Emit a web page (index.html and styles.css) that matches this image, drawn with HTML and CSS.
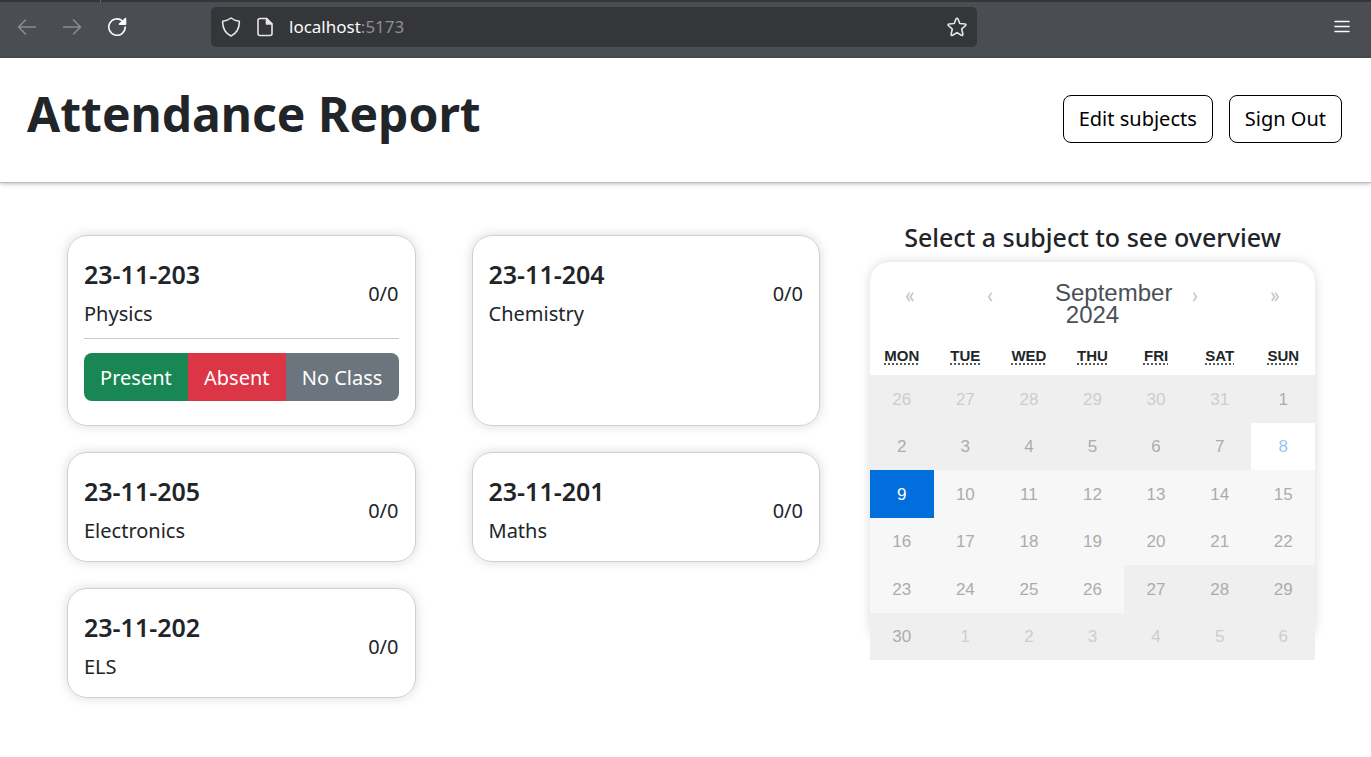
FILE: index.html
```html
<!DOCTYPE html>
<html lang="en">
<head>
<meta charset="utf-8">
<meta name="viewport" content="width=device-width, initial-scale=1">
<title>Attendance Report</title>
<link rel="stylesheet" href="styles.css">
</head>
<body>
<div class="tab-edge"></div>
<div class="toolbar">
  <div class="nav-buttons">
    <button class="tool dim" type="button" aria-label="Back"><svg width="20" height="20" viewBox="0 0 20 20"><path d="M18.300 10H1.800M8.500 3L1.500 10L8.500 17"/></svg></button>
    <button class="tool dim" type="button" aria-label="Forward"><svg width="20" height="20" viewBox="0 0 20 20"><path d="M1.500 10H18M11.500 3L18.500 10L11.500 17"/></svg></button>
    <button class="tool" type="button" aria-label="Reload"><svg width="20" height="20" viewBox="0 0 20 20"><path d="M15.500 4A8.200 8.200 0 1 0 18.200 10"/><path class="solid" d="M18.500 1.500V7.200H12.500Z"/></svg></button>
  </div>
  <div class="address">
    <svg class="icon" width="20" height="20" viewBox="0 0 20 20" aria-hidden="true"><path d="M10 1C12.500 3 15 3.800 18.300 4.200C18.600 11 16 16 10 19C4 16 1.400 11 1.700 4.200C5 3.800 7.500 3 10 1Z"/></svg>
    <svg class="icon" width="20" height="20" viewBox="0 0 20 20" aria-hidden="true"><path d="M11.500 1.500H5Q3 1.500 3 3.500V16.500Q3 18.500 5 18.500H15Q17 18.500 17 16.500V7Z"/><path class="solid" d="M11.500 1.500L17 7H11.500Z"/></svg>
    <span class="url">localhost<span class="port">:5173</span></span>
    <button class="tool" type="button" aria-label="Bookmark"><svg class="icon" width="20" height="20" viewBox="0 0 20 20"><path d="M10 1.200Q10.700 1.200 11 2L12.800 6.500L18 7Q19.600 7.400 18.500 8.600L14.700 12L15.900 17.200Q15.900 18.900 14.400 18.300L10 15.600L5.600 18.300Q4.100 18.900 4.100 17.200L5.300 12L1.500 8.600Q.4 7.400 2 7L7.200 6.500L9 2Q9.300 1.200 10 1.200Z"/></svg></button>
  </div>
  <button class="tool" type="button" aria-label="Menu"><svg width="20" height="20" viewBox="0 0 20 20"><path d="M3 4.500H17M3 9.500H17M3 14.500H17"/></svg></button>
</div>

<header class="header">
  <h1 class="title">Attendance Report</h1>
  <div class="actions">
    <button class="outline" type="button">Edit subjects</button>
    <button class="outline" type="button">Sign Out</button>
  </div>
</header>

<main class="main">
  <section class="cards">
    <article class="card">
      <div class="card-head"><div><h2 class="code">23-11-203</h2><p class="subject">Physics</p></div><span>0/0</span></div>
      <hr class="rule">
      <div class="group">
        <button class="mark present" type="button">Present</button>
        <button class="mark absent" type="button">Absent</button>
        <button class="mark none" type="button">No Class</button>
      </div>
    </article>
    <article class="card"><div class="card-head"><div><h2 class="code">23-11-204</h2><p class="subject">Chemistry</p></div><span>0/0</span></div></article>
    <article class="card"><div class="card-head"><div><h2 class="code">23-11-205</h2><p class="subject">Electronics</p></div><span>0/0</span></div></article>
    <article class="card"><div class="card-head"><div><h2 class="code">23-11-201</h2><p class="subject">Maths</p></div><span>0/0</span></div></article>
    <article class="card"><div class="card-head"><div><h2 class="code">23-11-202</h2><p class="subject">ELS</p></div><span>0/0</span></div></article>
  </section>

  <section class="overview">
    <h2 class="prompt">Select a subject to see overview</h2>
    <div class="calendar">
      <div class="cal-nav">
        <button class="arrow" type="button" aria-label="Previous year">«</button>
        <button class="arrow" type="button" aria-label="Previous month">‹</button>
        <button class="month" type="button">September 2024</button>
        <button class="arrow" type="button" aria-label="Next month">›</button>
        <button class="arrow" type="button" aria-label="Next year">»</button>
      </div>
      <div class="weekdays">
        <abbr title="Monday">Mon</abbr><abbr title="Tuesday">Tue</abbr><abbr title="Wednesday">Wed</abbr><abbr title="Thursday">Thu</abbr><abbr title="Friday">Fri</abbr><abbr title="Saturday">Sat</abbr><abbr title="Sunday">Sun</abbr>
      </div>
      <div class="days">
        <button class="day off other">26</button><button class="day off other">27</button><button class="day off other">28</button><button class="day off other">29</button><button class="day off other">30</button><button class="day off other">31</button><button class="day off">1</button>
        <button class="day off">2</button><button class="day off">3</button><button class="day off">4</button><button class="day off">5</button><button class="day off">6</button><button class="day off">7</button><button class="day open">8</button>
        <button class="day active">9</button><button class="day">10</button><button class="day">11</button><button class="day">12</button><button class="day">13</button><button class="day">14</button><button class="day">15</button>
        <button class="day">16</button><button class="day">17</button><button class="day">18</button><button class="day">19</button><button class="day">20</button><button class="day">21</button><button class="day">22</button>
        <button class="day">23</button><button class="day">24</button><button class="day">25</button><button class="day">26</button><button class="day off">27</button><button class="day off">28</button><button class="day off">29</button>
        <button class="day off">30</button><button class="day off other">1</button><button class="day off other">2</button><button class="day off other">3</button><button class="day off other">4</button><button class="day off other">5</button><button class="day off other">6</button>
      </div>
    </div>
  </section>
</main>
</body>
</html>
```
FILE: styles.css
```css
* { box-sizing: border-box; }

body {
  margin: 0;
  background: #fff;
  color: #212529;
  font: 20px/30px "Noto Sans", sans-serif;
}

button {
  margin: 0;
  padding: 0;
  border: 0;
  background: none;
  color: inherit;
  font: inherit;
  cursor: pointer;
}

h1, h2, p { margin: 0; }

/* Browser toolbar */
.tab-edge {
  height: 2px;
  background: linear-gradient(#6b6c70, #6b6c70) 100px 0 / 1px 2px no-repeat #35363a;
}
.toolbar {
  display: flex;
  align-items: center;
  gap: 84px;
  padding: 5px 19px 11px 17px;
  background: #4a4d51;
  color: #fbfbfe;
}
.toolbar > .tool { margin-left: auto; }
.nav-buttons { display: flex; gap: 25px; }
.tool { display: flex; }
.dim { color: #8b8c8f; }
.toolbar svg {
  display: block;
  fill: none;
  stroke: currentColor;
  stroke-width: 1.6;
  stroke-linecap: round;
  stroke-linejoin: round;
}
.toolbar .solid { fill: currentColor; }
.address {
  display: flex;
  align-items: center;
  flex: 0 1 766px;
  height: 40px;
  padding: 0 10px;
  gap: 14px;
  border-radius: 5px;
  background: #35363a;
}
.icon { color: #e6e6e8; }
.url { flex: 1; font-size: 17px; }
.port { color: #8f8f93; }

/* Page header */
.header {
  display: flex;
  align-items: center;
  justify-content: space-between;
  padding: 28px 29px 30px 27px;
  border-bottom: 1px solid #bdbdbd;
  box-shadow: 0 1px 4px rgba(0, 0, 0, .25);
}
.title { font-size: 48px; line-height: 56px; font-weight: 700; padding-bottom: 10px; }
.actions { display: flex; gap: 16px; }
.outline {
  padding: 8px 15px;
  border: 1px solid #000;
  border-radius: 8px;
  color: #000;
}

/* Page content */
.main {
  display: flex;
  align-items: flex-start;
  gap: 50px;
  padding: 39px 56px 60px 67px;
}
.cards {
  flex: 753 1 0;
  display: grid;
  grid-template-columns: 1fr 1fr;
  gap: 26px 56px;
  padding-top: 13px;
}
.card {
  padding: 23px 16px 15px;
  border: 1px solid #cfcfcf;
  border-radius: 20px;
  box-shadow: 0 0 12px rgba(0, 0, 0, .15);
}
.card-head { display: flex; align-items: center; justify-content: space-between; }
.code { font-size: 25px; line-height: 30px; font-weight: 600; padding-bottom: 10px; }
.rule { margin: 9px 0 14px; border: 0; border-top: 1px solid #c8c9ca; }
.group { display: flex; margin-bottom: 9px; border-radius: 8px; overflow: hidden; }
.mark { flex: 1 1 auto; padding: 10px 0 8px; color: #fff; }
.present { background: #198754; }
.absent { background: #dc3545; }
.none { background: #6c757d; }

/* Calendar */
.overview { flex: 445 1 0; min-width: 0; }
.prompt { font-size: 25px; line-height: 30px; font-weight: 500; padding-bottom: 10px; text-align: center; }
.calendar {
  max-height: 380px;
  border-radius: 20px;
  box-shadow: 0 0 12px rgba(0, 0, 0, .15);
  font-family: "Liberation Sans", Arial, sans-serif;
}
.cal-nav { display: flex; padding: 8px 0; line-height: 22px; }
.arrow { flex: 0 0 80px; padding-bottom: 16px; color: #c4c4c4; font-family: Lato, sans-serif; font-size: 24px; }
.month { flex: 1; min-width: 0; padding: 12px 25px 8px; color: #495057; font-size: 24px; }
.weekdays {
  display: grid;
  grid-template-columns: repeat(7, 1fr);
  justify-items: center;
  padding: 5px 0 11px;
  font-size: 15px;
  line-height: 17px;
  font-weight: 700;
  text-transform: uppercase;
}
.weekdays abbr { text-decoration: underline dotted; text-underline-offset: 3px; text-decoration-skip-ink: none; }
.days {
  display: grid;
  grid-template-columns: repeat(7, 1fr);
  grid-auto-rows: 1fr;
  min-height: 285px;
}
.day { padding-top: 2px; background: #f7f7f7; color: #acacac; font-size: 17px; line-height: 20px; }
.off { background: #efefef; }
.other { color: #cdcdcd; }
.open { background: #fff; color: #99c5f1; }
.active { background: #006edc; color: #fff; }
```
